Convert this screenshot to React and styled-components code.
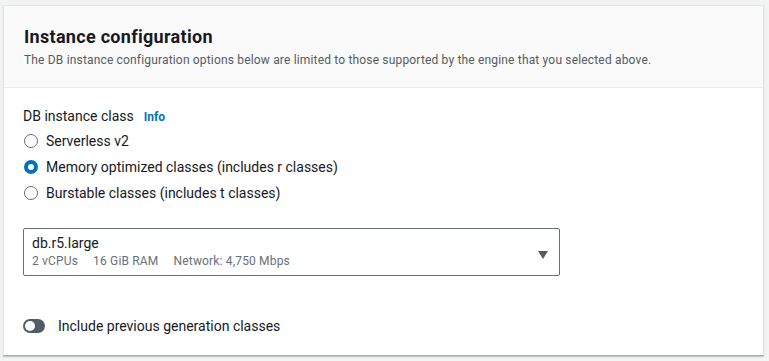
import styled, { createGlobalStyle } from 'styled-components'
import { useState } from 'react';

const Global = createGlobalStyle`
    html, body { margin: 0; padding: 0; background: #f2f3f3; }
    body { font-family: Roboto, "Liberation Sans", sans-serif; color: #16191f; }
`

const Page = styled.div`
    padding: 5px 5px 5px 3px;
    width: 769px;
    height: 361px;
    box-sizing: border-box;
`

const Card = styled.div`
    background: #fff;
    border: 1px solid #e3e5e5;
    border-bottom: 1px solid #a6b0b0;
    box-shadow: 0 1px 1px rgba(0, 28, 36, 0.2);
    height: 351px;
    box-sizing: border-box;
    display: flex;
    flex-direction: column;
`

const Header = styled.div`
    background: #fafafa;
    border-bottom: 1px solid #eaeded;
    padding: 19px 20px 0 20px;
    height: 82px;
    box-sizing: border-box;
`

const Title = styled.h2`
    margin: 0;
    font-size: 18px;
    line-height: 24px;
    font-weight: 700;
    letter-spacing: 0.3px;
`

const Desc = styled.p`
    margin: 3px 0 0;
    font-size: 12px;
    line-height: 16px;
    color: #545b64;
    letter-spacing: 0.17px;
`

const Body = styled.div`
    padding: 18px 20px 0 19px;
    display: flex;
    flex-direction: column;
`

const Label = styled.div`
    font-size: 14px;
    line-height: 20px;
    display: flex;
    align-items: baseline;
    gap: 10px;
`

const Info = styled.span`
    font-size: 12px;
    font-weight: 700;
    color: #0073bb;
`

const RadioList = styled.div`
    display: flex;
    flex-direction: column;
    gap: 6px;
    margin-top: 4px;
`

const RadioRow = styled.label`
    display: flex;
    align-items: center;
    gap: 8px;
    font-size: 14px;
    line-height: 20px;
    padding-left: 1px;
    cursor: pointer;
`

const RadioDot = styled.span`
    width: 14px;
    height: 14px;
    border-radius: 50%;
    box-sizing: border-box;
    border: ${p => (p.$on ? '4px solid #0073bb' : '1.5px solid #687078')};
    background: #fff;
`

const Select = styled.div`
    margin-top: 25px;
    width: 537px;
    height: 48px;
    box-sizing: border-box;
    border: 1px solid #687078;
    border-radius: 2px;
    padding: 5px 11px 0 8px;
    display: flex;
    align-items: center;
    justify-content: space-between;
`

const SelectText = styled.div`
    display: flex;
    flex-direction: column;
    align-self: flex-start;
`

const SelectValue = styled.div`
    font-size: 14px;
    line-height: 18px;
`

const Specs = styled.div`
    display: flex;
    gap: 15px;
    font-size: 12px;
    line-height: 18px;
    color: #687078;
    letter-spacing: 0.17px;
`

const Toggle = styled.div`
    margin-top: 40px;
    display: flex;
    align-items: center;
    gap: 13px;
    font-size: 14px;
    line-height: 20px;
`

const Track = styled.span`
    width: 22px;
    height: 14px;
    border-radius: 7px;
    background: #545b64;
    position: relative;

    &::after {
        content: '';
        position: absolute;
        left: 2px;
        top: 2px;
        width: 10px;
        height: 10px;
        border-radius: 50%;
        background: #fff;
    }
`

function App() {
    const [choice, setChoice] = useState(1);
    const options = [
        'Serverless v2',
        'Memory optimized classes (includes r classes)',
        'Burstable classes (includes t classes)',
    ];
    return (
        <Page>
            <Global />
            <Card>
                <Header>
                    <Title>Instance configuration</Title>
                    <Desc>The DB instance configuration options below are limited to those supported by the engine that you selected above.</Desc>
                </Header>
                <Body>
                    <Label>DB instance class <Info>Info</Info></Label>
                    <RadioList>
                        {options.map((o, i) => (
                            <RadioRow key={o} onClick={() => setChoice(i)}>
                                <RadioDot $on={choice === i} />
                                {o}
                            </RadioRow>
                        ))}
                    </RadioList>
                    <Select>
                        <SelectText>
                            <SelectValue>db.r5.large</SelectValue>
                            <Specs>
                                <span>2 vCPUs</span>
                                <span>16 GiB RAM</span>
                                <span>Network: 4,750 Mbps</span>
                            </Specs>
                        </SelectText>
                        <svg width="10" height="8" viewBox="0 0 10 8">
                            <path d="M0 0 H10 L5 8 Z" fill="#545b64" />
                        </svg>
                    </Select>
                    <Toggle>
                        <Track />
                        Include previous generation classes
                    </Toggle>
                </Body>
            </Card>
        </Page>
    );
}

export default App;
